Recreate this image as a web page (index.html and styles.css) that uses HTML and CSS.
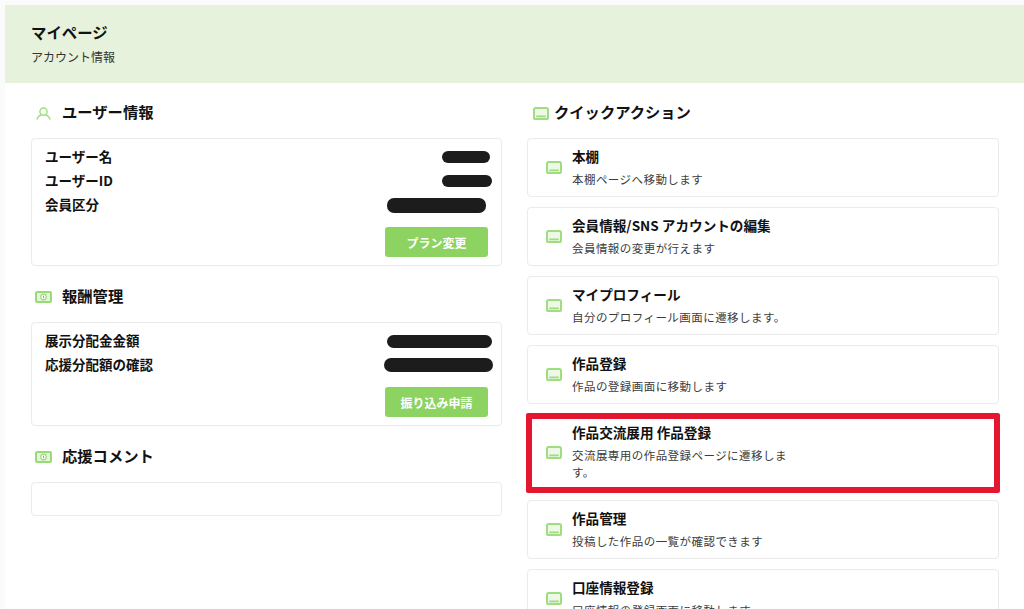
FILE: index.html
```html
<!DOCTYPE html>
<html lang="ja">
<head>
<meta charset="utf-8">
<title>マイページ</title>
<link rel="stylesheet" href="styles.css">
</head>
<body>
<svg class="defs" width="0" height="0" aria-hidden="true">
  <symbol id="i-tray" viewBox="0 0 16 13">
    <rect x="1" y="1" width="14" height="11" rx="1.6" fill="#eef8e7" stroke="#a0dd80" stroke-width="2"/>
    <path d="M3.2 9.4h9.6" stroke="#a0dd80" stroke-width="1.8"/>
  </symbol>
  <symbol id="i-money" viewBox="0 0 17 12">
    <rect x="1" y="1" width="15" height="10" rx="1.2" fill="#e4f5d9" stroke="#98da75" stroke-width="2"/>
    <circle cx="8.5" cy="6" r="2.8" fill="#fff" stroke="#98da75" stroke-width="1.2"/>
    <path d="M8.5 4.7v2.6" stroke="#6fbb48" stroke-width="1"/>
  </symbol>
  <symbol id="i-user" viewBox="0 0 15 13">
    <circle cx="7.5" cy="4.6" r="3.6" fill="none" stroke="#a0dd80" stroke-width="1.4"/>
    <path d="M0.8 12.6c1-2.9 3-4.3 4.3-4.6M14.2 12.6c-1-2.9-3-4.3-4.3-4.6" fill="none" stroke="#a0dd80" stroke-width="1.4"/>
  </symbol>
</svg>
<div class="page">
  <header class="hero">
    <h1 class="hero-title">マイページ</h1>
    <p class="hero-sub">アカウント情報</p>
  </header>
  <main class="columns">
    <div class="col">
      <section class="sec">
        <h2 class="head head-left"><svg class="ic-user"><use href="#i-user"/></svg><span class="head-text">ユーザー情報</span></h2>
        <div class="card">
          <div class="row"><span class="label">ユーザー名</span><span class="blob blob-a"></span></div>
          <div class="row"><span class="label">ユーザーID</span><span class="blob blob-b"></span></div>
          <div class="row"><span class="label">会員区分</span><span class="blob blob-c"></span></div>
          <div class="actions"><a class="btn">プラン変更</a></div>
        </div>
      </section>
      <section class="sec">
        <h2 class="head head-left"><svg class="ic-money"><use href="#i-money"/></svg><span class="head-text">報酬管理</span></h2>
        <div class="card">
          <div class="row"><span class="label">展示分配金金額</span><span class="blob blob-d"></span></div>
          <div class="row"><span class="label">応援分配額の確認</span><span class="blob blob-e"></span></div>
          <div class="actions"><a class="btn">振り込み申請</a></div>
        </div>
      </section>
      <section class="sec">
        <h2 class="head head-left"><svg class="ic-money"><use href="#i-money"/></svg><span class="head-text">応援コメント</span></h2>
        <div class="card card-empty"></div>
      </section>
    </div>
    <div class="col">
      <h2 class="head head-right"><svg class="ic-tray"><use href="#i-tray"/></svg><span class="head-text">クイックアクション</span></h2>
      <div class="list">
        <a class="item"><svg class="ic-tray"><use href="#i-tray"/></svg><div><h3 class="item-title">本棚</h3><p class="item-desc">本棚ページへ移動します</p></div></a>
        <a class="item"><svg class="ic-tray"><use href="#i-tray"/></svg><div><h3 class="item-title">会員情報/SNS アカウントの編集</h3><p class="item-desc">会員情報の変更が行えます</p></div></a>
        <a class="item"><svg class="ic-tray"><use href="#i-tray"/></svg><div><h3 class="item-title">マイプロフィール</h3><p class="item-desc">自分のプロフィール画面に遷移します。</p></div></a>
        <a class="item"><svg class="ic-tray"><use href="#i-tray"/></svg><div><h3 class="item-title">作品登録</h3><p class="item-desc">作品の登録画面に移動します</p></div></a>
        <a class="item item-marked"><svg class="ic-tray"><use href="#i-tray"/></svg><div><h3 class="item-title">作品交流展用 作品登録</h3><p class="item-desc">交流展専用の作品登録ページに遷移します。</p></div></a>
        <a class="item"><svg class="ic-tray"><use href="#i-tray"/></svg><div><h3 class="item-title">作品管理</h3><p class="item-desc">投稿した作品の一覧が確認できます</p></div></a>
        <a class="item"><svg class="ic-tray"><use href="#i-tray"/></svg><div><h3 class="item-title">口座情報登録</h3><p class="item-desc">口座情報の登録画面に移動します</p></div></a>
      </div>
    </div>
  </main>
</div>
</body>
</html>
```
FILE: styles.css
```css
* { box-sizing: border-box; }
html, body { margin: 0; height: 100%; }
body {
  background: #fbfbfb;
  overflow: hidden;
  padding: 5px 0 0 5px;
  font-family: "Noto Sans CJK JP", "Noto Sans", sans-serif;
  color: #111;
}
.defs { position: absolute; }
.page { background: #fff; height: 100%; }
.hero {
  background: #e6f2dc;
  height: 78px;
  padding: 16px 26px 0;
}
.hero-title { margin: 0; font-size: 15.4px; line-height: 22px; font-weight: 700; }
.hero-sub { margin: 4px 0 0; font-size: 12px; line-height: 20px; color: #333; font-weight: 400; }
.columns {
  display: grid;
  grid-template-columns: 471px 472px;
  column-gap: 25px;
  padding: 17px 0 0 26px;
  align-items: start;
}
.sec + .sec { margin-top: 18px; }
.head {
  display: flex;
  align-items: center;
  height: 26px;
  margin: 0 0 12px;
  font-size: 15.3px;
  font-weight: 700;
}
.head-text { margin-bottom: 4px; }
.head-left { padding-left: 5px; }
.head-left .ic-money { margin-left: -1px; margin-right: 10px; }
.head-left .ic-user { margin-right: 11px; }
.head-right { padding-left: 6px; }
.head-right .ic-tray { margin-right: 5px; }
.ic-user { width: 15px; height: 13px; flex: none; }
.ic-money { width: 17px; height: 12px; flex: none; }
.ic-tray { width: 16px; height: 13px; flex: none; }
.card {
  background: #fff;
  border: 1px solid #ebebeb;
  border-radius: 4px;
  padding: 6px 13px 8px 13px;
}
.card-empty { height: 34px; padding: 0; }
.row {
  display: flex;
  justify-content: space-between;
  align-items: center;
  height: 24px;
}
.label { font-size: 13.5px; font-weight: 700; margin-bottom: 3px; }
.blob { display: block; background: #1c1c1c; border-radius: 7px; }
.blob-a { width: 48px; height: 12px; margin-right: -2px; }
.blob-b { width: 50px; height: 12px; margin-right: -4px; }
.blob-c { width: 99px; height: 15px; margin-right: 2px; }
.blob-d { width: 105px; height: 13px; margin-right: -4px; }
.blob-e { width: 109px; height: 14px; margin-right: -5px; }
.actions { display: flex; justify-content: flex-end; margin-top: 10px; }
.btn {
  display: flex;
  align-items: center;
  justify-content: center;
  width: 103px;
  height: 30px;
  border-radius: 3px;
  background: #8cd362;
  color: #fff;
  font-size: 12px;
  font-weight: 700;
}
.list { display: flex; flex-direction: column; gap: 10px; }
.item {
  position: relative;
  display: flex;
  align-items: center;
  gap: 10px;
  background: #fff;
  border: 1px solid #ebebeb;
  border-radius: 4px;
  padding: 8px 18px 8px;
}
.item-title { margin: 0 0 6px; font-size: 13.6px; line-height: 18px; font-weight: 700; }
.item-desc { margin: 0; max-width: 220px; font-size: 11.5px; line-height: 17px; color: #3c3c3c; letter-spacing: 0.45px; }
.item:not(.item-marked) .item-desc { max-width: none; }
.item-marked::after {
  content: "";
  position: absolute;
  inset: -2px -2px -4px -2px;
  border: 6px solid #e5162f;
  border-radius: 2px;
}
```
